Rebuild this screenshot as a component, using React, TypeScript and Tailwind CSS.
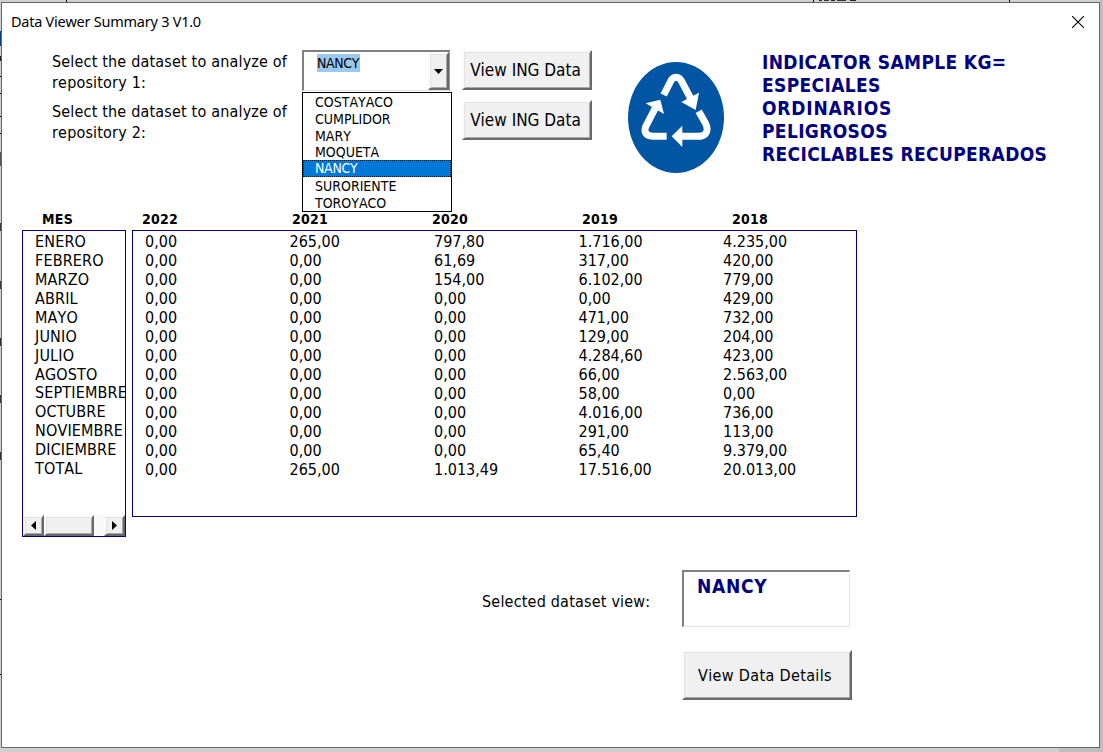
import React from "react";

const options = ["COSTAYACO", "CUMPLIDOR", "MARY", "MOQUETA", "NANCY", "SURORIENTE", "TOROYACO"];

const months = [
  "ENERO", "FEBRERO", "MARZO", "ABRIL", "MAYO", "JUNIO", "JULIO",
  "AGOSTO", "SEPTIEMBRE", "OCTUBRE", "NOVIEMBRE", "DICIEMBRE", "TOTAL",
];

const rows = [
  ["0,00", "265,00", "797,80", "1.716,00", "4.235,00"],
  ["0,00", "0,00", "61,69", "317,00", "420,00"],
  ["0,00", "0,00", "154,00", "6.102,00", "779,00"],
  ["0,00", "0,00", "0,00", "0,00", "429,00"],
  ["0,00", "0,00", "0,00", "471,00", "732,00"],
  ["0,00", "0,00", "0,00", "129,00", "204,00"],
  ["0,00", "0,00", "0,00", "4.284,60", "423,00"],
  ["0,00", "0,00", "0,00", "66,00", "2.563,00"],
  ["0,00", "0,00", "0,00", "58,00", "0,00"],
  ["0,00", "0,00", "0,00", "4.016,00", "736,00"],
  ["0,00", "0,00", "0,00", "291,00", "113,00"],
  ["0,00", "0,00", "0,00", "65,40", "9.379,00"],
  ["0,00", "265,00", "1.013,49", "17.516,00", "20.013,00"],
];

// Sheet grid lines and cells that peek out past the dialog's edges.
const sheetMarks = [
  "left-[66px] top-0 h-[2px] w-px bg-black",
  "left-[813px] top-0 h-[2px] w-px bg-black",
  "left-[1009px] top-0 h-[2px] w-px bg-black",
  "left-[819px] top-0 h-px w-[3px] bg-[#222]",
  "left-[824px] top-0 h-px w-[5px] bg-[#333]",
  "left-[831px] top-0 h-px w-[4px] bg-[#222]",
  "left-[837px] top-0 h-px w-[9px] bg-[#333]",
  "left-[850px] top-0 h-px w-[6px] bg-[#222]",
  "left-0 top-[31px] h-[15px] w-px bg-[#0a3f7c]",
  "left-0 top-[56px] h-[5px] w-px bg-[#222]",
  "left-0 top-[76px] h-px w-px bg-black",
  "left-0 top-[93px] h-px w-px bg-black",
  "left-0 top-[116px] h-px w-px bg-black",
  "left-0 top-[133px] h-px w-px bg-black",
  "left-0 top-[152px] h-[14px] w-px bg-[#555]",
  "left-0 top-[223px] h-[8px] w-px bg-[#333]",
  "left-0 top-[281px] h-[8px] w-px bg-[#333]",
  "left-0 top-[338px] h-[8px] w-px bg-[#333]",
  "left-0 top-[395px] h-[8px] w-px bg-[#333]",
  "left-0 top-[452px] h-[8px] w-px bg-[#333]",
  "left-0 top-[599px] h-px w-px bg-black",
  "left-0 top-[674px] h-px w-px bg-black",
  "right-0 top-0 h-full w-[3px] bg-[#bdbdbd]",
  "right-0 bottom-0 h-[4px] w-[44px] bg-[#bdbdbd]",
];

const raised =
  "border-2 border-t-[#fbfbfb] border-l-[#fbfbfb] border-r-[#696969] border-b-[#696969] bg-[#f0f0f0] shadow-[inset_1px_1px_0_#e3e3e3,inset_-1px_-1px_0_#a8a8a8]";

function FormButton({ className, children }: { className: string; children: React.ReactNode }) {
  return (
    <button className={`flex items-center justify-center pt-px whitespace-nowrap ${raised} ${className}`}>
      {children}
    </button>
  );
}

function RecycleLogo() {
  return (
    <svg className="mt-[22px] ml-9 h-[111px] w-24 shrink-0" viewBox="54 66 288 333">
      <ellipse cx="198" cy="232.5" rx="144" ry="166.5" fill="#0255a3" />
      <g fill="none" stroke="#fff" strokeWidth="21">
        <path d="M161 165 L180 128 Q186 112 198 112 Q210 112 217 128 L243 177" />
        <path d="M266 214 L286 249 Q297 269 286 282 Q279 289 264 289 L212 289" />
        <path d="M170 289 L128 289 Q98 286 107 260 L137 202" />
      </g>
      <g fill="#fff">
        <path d="M214 186 L267 158 L257 210 Z" />
        <path d="M185 289 L217 257 L217 321 Z" />
        <path d="M107 190 L151 179 L162 222 Z" />
      </g>
    </svg>
  );
}

function Combo() {
  return (
    <div className="relative mt-[10px] h-[41px] w-[148px] shrink-0">
      <div className="flex h-full border-t-2 border-l-2 border-r border-b border-t-[#808080] border-l-[#808080] border-r-[#999] border-b-[#e3e3e3] bg-white">
        <div className="grow pt-[2px] pl-[13px]">
          <span className="block w-[43px] bg-[#99c9ef] text-[14px] leading-[18px] tracking-[-0.4px] whitespace-nowrap">NANCY</span>
        </div>
        <div className={`flex w-[21px] items-center justify-center ${raised}`}>
          <svg className="h-[5px] w-[9px]" viewBox="0 0 9 5"><path d="M0 0H9L4.5 5Z" /></svg>
        </div>
      </div>
      <ul className="absolute top-[42px] left-0 z-10 h-[120px] w-[150px] border border-black bg-white pt-px text-[14px] leading-[16.8px]">
        {options.map((o) => (
          <li
            key={o}
            className={o === "NANCY" ? "-mt-px mb-px bg-[#0078d7] pl-3 tracking-[-0.3px] text-white outline-1 -outline-offset-1 outline-dotted outline-[#001a40]" : "pl-3"}
          >
            {o}
          </li>
        ))}
      </ul>
    </div>
  );
}

export default function App() {
  return (
    <div className="relative h-[752px] w-[1103px] overflow-hidden bg-[#d0d0d0] pt-[2px] pl-px font-['DejaVu_Sans_Condensed','DejaVu_Sans',sans-serif] text-black [font-kerning:none] [font-stretch:condensed]">
      {sheetMarks.map((m) => <i key={m} className={`absolute ${m}`} />)}
      <main className="relative flex h-[746px] w-[1099px] flex-col border border-[#666] bg-white">
        <header className="flex h-[37px] shrink-0 items-center justify-between pr-[15px] pl-[9px] font-['Noto_Sans',sans-serif]">
          <h1 className="text-[14.5px] tracking-[-0.25px] whitespace-nowrap">Data Viewer Summary 3 V1.0</h1>
          <svg className="h-3 w-3" viewBox="0 0 12 12"><path d="M0 0L12 12M12 0L0 12" stroke="#000" strokeWidth="1.1" /></svg>
        </header>

        <section className="flex h-[169px] shrink-0 items-start pl-[50px]">
          <div className="flex w-[250px] shrink-0 flex-col gap-2 pt-[11px] text-[16px] leading-[21px] tracking-[0.18px]">
            <p className="whitespace-nowrap">Select the dataset to analyze of<br />repository 1:</p>
            <p className="whitespace-nowrap">Select the dataset to analyze of<br />repository 2:</p>
          </div>
          <Combo />
          <div className="ml-3 flex flex-col gap-[10px] pt-[10px] text-[17px]">
            <FormButton className="h-10 w-[130px] pr-[3px]">View ING Data</FormButton>
            <FormButton className="h-10 w-[130px] pr-[3px]">View ING Data</FormButton>
          </div>
          <RecycleLogo />
          <div className="ml-[38px] pt-[11px] text-[19px] leading-[23px] font-bold tracking-[0.35px] whitespace-nowrap text-[#000080]">
            <p>INDICATOR SAMPLE KG=</p>
            <p>ESPECIALES</p>
            <p className="tracking-[0.8px]">ORDINARIOS</p>
            <p>PELIGROSOS</p>
            <p>RECICLABLES RECUPERADOS</p>
          </div>
        </section>

        <div className="grid h-[21px] shrink-0 grid-cols-[100px_150px_140px_150px_150px_150px] pl-10 text-[14px] leading-[21px] font-bold tracking-[0.25px]">
          {["MES", "2022", "2021", "2020", "2019", "2018"].map((h) => <span key={h}>{h}</span>)}
        </div>

        <section className="flex h-[307px] shrink-0 items-start gap-[6px] pl-5 text-[16px] leading-[19px]">
          <div className="flex h-[307px] w-[104px] flex-col overflow-hidden border border-[#000080]">
            <ul className="grow pt-px pl-3 tracking-[0.15px]">
              {months.map((m) => <li key={m} className={m === "AGOSTO" ? "h-[18px]" : "h-[19px]"}>{m}</li>)}
            </ul>
            <div className="flex h-[21px] shrink-0 bg-[#f8f8f8]">
              <div className={`flex w-[21px] items-center justify-center ${raised}`}>
                <svg className="h-[9px] w-[5px]" viewBox="0 0 5 9"><path d="M5 0V9L0 4.5Z" /></svg>
              </div>
              <div className={`w-[50px] ${raised}`} />
              <div className={`ml-auto flex w-[21px] items-center justify-center ${raised}`}>
                <svg className="h-[9px] w-[5px]" viewBox="0 0 5 9"><path d="M0 0V9L5 4.5Z" /></svg>
              </div>
            </div>
          </div>
          <div className="h-[287px] w-[725px] border border-[#000080] pt-px pl-3">
            {rows.map((r, i) => (
              <div key={i} className="grid grid-cols-[repeat(5,144.5px)]">
                {r.map((v, j) => <span key={j}>{v}</span>)}
              </div>
            ))}
          </div>
        </section>

        <section className="flex items-start pt-[33px] pl-[480px]">
          <p className="w-[200px] pt-[21px] text-[16px] leading-[21px] tracking-[0.2px] whitespace-nowrap">Selected dataset view:</p>
          <div className="flex flex-col gap-[23px]">
            <div className="h-[57px] w-[168px] border-t-2 border-l-2 border-r border-b border-t-[#808080] border-l-[#808080] border-r-[#e3e3e3] border-b-[#e3e3e3] pt-[3px] pl-[13px] text-[19px] leading-[23px] font-bold tracking-[0.7px] text-[#000080]">
              NANCY
            </div>
            <FormButton className="h-[50px] w-[170px] pr-[4px] text-[16px] tracking-[0.35px]">View Data Details</FormButton>
          </div>
        </section>
      </main>
    </div>
  );
}
